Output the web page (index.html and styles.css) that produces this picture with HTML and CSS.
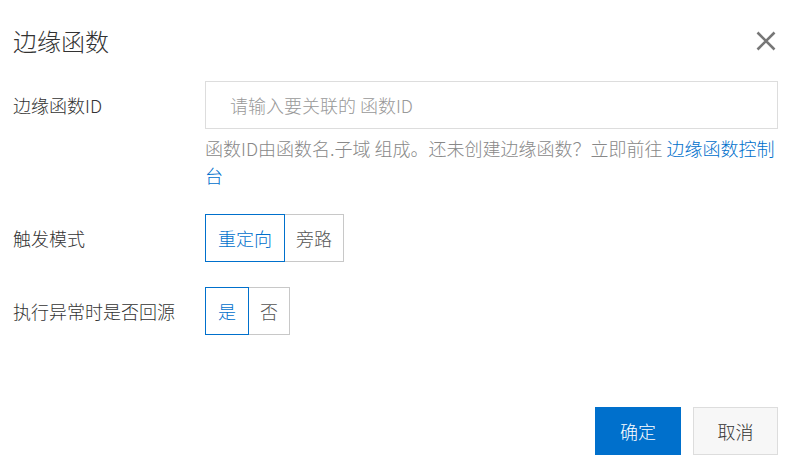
FILE: index.html
```html
<!DOCTYPE html>
<html lang="zh-CN">
<head>
<meta charset="utf-8">
<title>边缘函数</title>
<link rel="stylesheet" href="styles.css">
</head>
<body>
<div class="dialog">
  <header class="dlg-head">
    <h2 class="dlg-title">边缘函数</h2>
    <button class="dlg-close" type="button" aria-label="关闭">
      <svg width="20" height="20" viewBox="0 0 20 20"><path d="M1.5 1.5 L18.5 18.5 M18.5 1.5 L1.5 18.5" stroke="#777" stroke-width="2.6" fill="none"/></svg>
    </button>
  </header>
  <form class="dlg-body">
    <div class="row">
      <label class="lbl">边缘函数ID</label>
      <div class="ctrl">
        <input class="txt" type="text" placeholder="请输入要关联的 函数ID">
        <p class="help">函数ID由函数名.子域 组成。还未创建边缘函数？立即前往 <a class="link" href="#">边缘函数控制台</a></p>
      </div>
    </div>
    <div class="row">
      <label class="lbl">触发模式</label>
      <div class="ctrl">
        <div class="seg">
          <span class="seg-btn on">重定向</span><span class="seg-btn">旁路</span>
        </div>
      </div>
    </div>
    <div class="row">
      <label class="lbl">执行异常时是否回源</label>
      <div class="ctrl">
        <div class="seg">
          <span class="seg-btn on">是</span><span class="seg-btn">否</span>
        </div>
      </div>
    </div>
  </form>
  <footer class="dlg-foot">
    <button class="btn primary" type="button">确定</button>
    <button class="btn normal" type="button">取消</button>
  </footer>
</div>
</body>
</html>
```
FILE: styles.css
```css
* { box-sizing: border-box; }
html, body {
  margin: 0;
  padding: 0;
  background: #ffffff;
}
body {
  font-family: "Noto Sans CJK SC", "Noto Sans", sans-serif;
  font-weight: 300;
  color: #333333;
  font-size: 18px;
}
.dialog {
  width: 794px;
  height: 469px;
  display: flex;
  flex-direction: column;
}
.dlg-head {
  display: flex;
  align-items: center;
  justify-content: space-between;
  padding: 23px 18px 0 13px;
}
.dlg-title {
  margin: 0;
  font-size: 24px;
  line-height: 36px;
  font-weight: 300;
  color: #333333;
}
.dlg-close {
  border: 0;
  background: none;
  padding: 0;
  width: 20px;
  height: 20px;
  display: flex;
}
.dlg-body {
  margin: 22px 0 0;
  padding: 0 16px 0 13px;
}
.row {
  display: grid;
  grid-template-columns: 192px 1fr;
  margin-bottom: 25px;
}
.lbl {
  font-size: 18px;
  line-height: 48px;
  color: #333333;
}
.ctrl { min-width: 0; }
.txt {
  display: block;
  width: 100%;
  height: 48px;
  border: 1px solid #dddddd;
  padding: 0 24px;
  font: inherit;
  font-size: 18px;
  color: #333333;
  outline: none;
}
.txt::placeholder { color: #999999; }
.help {
  margin: 6px 0 0;
  font-size: 18px;
  line-height: 27px;
  color: #888888;
}
.link {
  color: #0070cc;
  text-decoration: none;
}
.seg {
  display: flex;
}
.seg-btn {
  height: 48px;
  line-height: 46px;
  padding: 0 11px;
  border: 1px solid #c8c8c8;
  color: #555555;
  font-size: 18px;
  background: #ffffff;
}
.seg-btn + .seg-btn { margin-left: -1px; }
.seg-btn.on {
  padding: 0 12px;
  border-color: #0070cc;
  color: #0070cc;
  position: relative;
  z-index: 1;
}
.dlg-foot {
  margin-top: auto;
  display: flex;
  justify-content: flex-end;
  gap: 12px;
  padding: 0 16px 14px;
}
.btn {
  height: 48px;
  font: inherit;
  font-size: 18px;
  padding: 0;
  border: 1px solid transparent;
}
.btn.primary {
  width: 86px;
  background: #0070cc;
  border-color: #0070cc;
  color: #ffffff;
}
.btn.normal {
  width: 85px;
  background: #f7f7f7;
  border-color: #dddddd;
  color: #333333;
}
```
